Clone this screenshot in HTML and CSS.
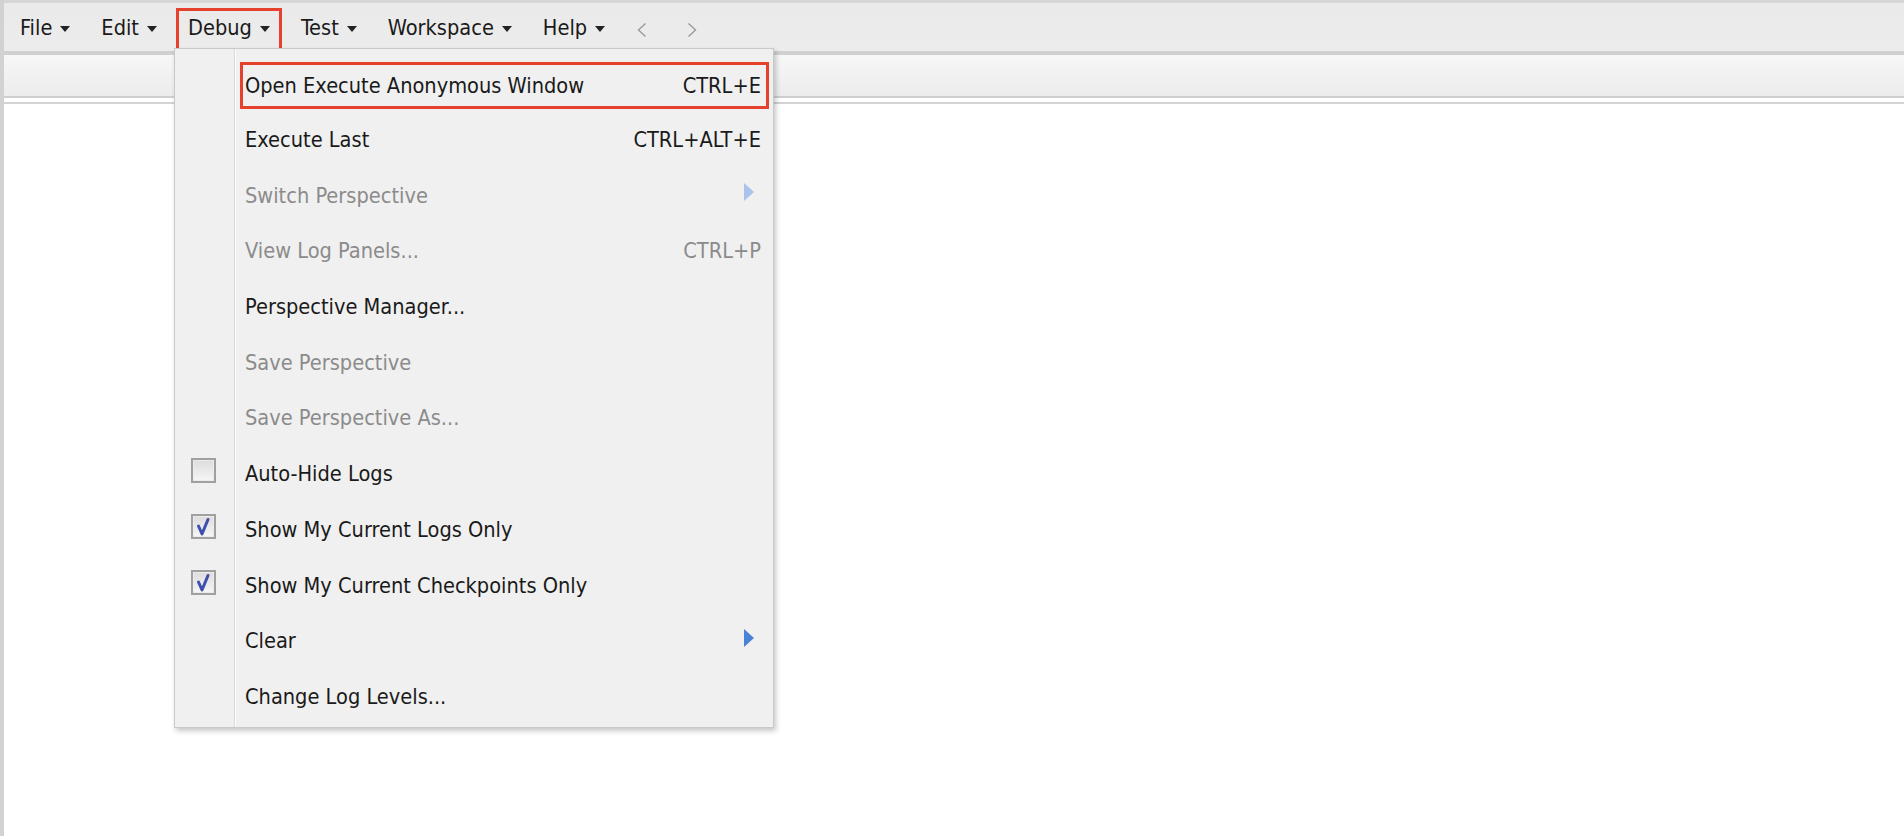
FILE: index.html
```html
<!DOCTYPE html>
<html lang="en">
<head>
<meta charset="utf-8">
<title>Developer Console</title>
<link rel="stylesheet" href="styles.css">
</head>
<body>
<div class="app">
  <div class="topstrip"></div>
  <nav class="menubar">
    <div class="mitem"><span>File</span><i class="caret"></i></div>
    <div class="mitem"><span>Edit</span><i class="caret"></i></div>
    <div class="mitem active"><span>Debug</span><i class="caret"></i></div>
    <div class="mitem"><span>Test</span><i class="caret"></i></div>
    <div class="mitem"><span>Workspace</span><i class="caret"></i></div>
    <div class="mitem"><span>Help</span><i class="caret"></i></div>
    <div class="navs">
      <svg class="chev" width="12" height="16" viewBox="0 0 12 16"><path d="M9.5 1.5 L2.5 8 L9.5 14.5" fill="none" stroke="#9a9a9a" stroke-width="1.4"/></svg>
      <svg class="chev" width="12" height="16" viewBox="0 0 12 16"><path d="M2.5 1.5 L9.5 8 L2.5 14.5" fill="none" stroke="#9a9a9a" stroke-width="1.4"/></svg>
    </div>
  </nav>
  <div class="toolbar"></div>
  <div class="content"></div>

  <div class="dropdown">
    <div class="row hl"><span class="icon"></span><span class="body"><span class="label">Open Execute Anonymous Window</span><span class="key">CTRL+E</span></span></div>
    <div class="row"><span class="icon"></span><span class="body"><span class="label">Execute Last</span><span class="key">CTRL+ALT+E</span></span></div>
    <div class="row dis"><span class="icon"></span><span class="body"><span class="label">Switch Perspective</span><span class="sub light"></span></span></div>
    <div class="row dis"><span class="icon"></span><span class="body"><span class="label">View Log Panels...</span><span class="key">CTRL+P</span></span></div>
    <div class="row"><span class="icon"></span><span class="body"><span class="label">Perspective Manager...</span></span></div>
    <div class="row dis"><span class="icon"></span><span class="body"><span class="label">Save Perspective</span></span></div>
    <div class="row dis"><span class="icon"></span><span class="body"><span class="label">Save Perspective As...</span></span></div>
    <div class="row"><span class="icon"><span class="cb"></span></span><span class="body"><span class="label">Auto-Hide Logs</span></span></div>
    <div class="row"><span class="icon"><span class="cb"><svg width="21" height="21" viewBox="0 0 21 21"><path d="M5.5 10 L9 18 L15 3.5" fill="none" stroke="#3d50ad" stroke-width="3" stroke-linecap="round" stroke-linejoin="round"/></svg></span></span><span class="body"><span class="label">Show My Current Logs Only</span></span></div>
    <div class="row"><span class="icon"><span class="cb"><svg width="21" height="21" viewBox="0 0 21 21"><path d="M5.5 10 L9 18 L15 3.5" fill="none" stroke="#3d50ad" stroke-width="3" stroke-linecap="round" stroke-linejoin="round"/></svg></span></span><span class="body"><span class="label">Show My Current Checkpoints Only</span></span></div>
    <div class="row"><span class="icon"></span><span class="body"><span class="label">Clear</span><span class="sub"></span></span></div>
    <div class="row"><span class="icon"></span><span class="body"><span class="label">Change Log Levels...</span></span></div>
  </div>
</div>
</body>
</html>
```

FILE: styles.css
```css
* { box-sizing: border-box; }
html, body { margin: 0; padding: 0; height: 100%; }
body {
  font-family: "DejaVu Sans Condensed", "DejaVu Sans", sans-serif;
  font-size: 21.6px;
  color: #1a1a1a;
  background: #ffffff;
}
.app {
  position: relative;
  height: 836px;
  border-left: 4px solid #d2d2d2;
  display: flex;
  flex-direction: column;
  overflow: hidden;
}
.topstrip { height: 3px; background: #d6d6d6; }
.menubar {
  height: 48px;
  background: linear-gradient(#eaeaea, #ececec);
  display: flex;
  align-items: flex-start;
  padding-left: 4px;
  gap: 7px;
}
.mitem {
  height: 44px;
  margin-top: 5px;
  border: 3px solid transparent;
  padding: 0 9px 0 9px;
  display: flex;
  align-items: center;
  gap: 8px;
  line-height: 1;
}
.mitem span { position: relative; top: -2px; }
.mitem.active { border-color: #e5412d; }
.caret {
  width: 0; height: 0;
  border-left: 5px solid transparent;
  border-right: 5px solid transparent;
  border-top: 6px solid #222;
  position: relative; top: -1px;
}
.navs {
  display: flex;
  gap: 38px;
  margin-left: 12px;
  margin-top: 19px;
}
.toolbar {
  height: 47px;
  border-top: 4px solid #d0d0d0;
  background: linear-gradient(#f7f7f7, #ececec);
  border-bottom: 2px solid #cfcfcf;
}
.content {
  flex: 1;
  border-top: 2px solid #d3d3d3;
  margin-top: 4px;
  background: #fff;
}
.dropdown {
  position: absolute;
  left: 170px;
  top: 48px;
  width: 600px;
  height: 680px;
  background: #f0f0f0;
  border: 1px solid #c9c9c9;
  box-shadow: 2px 3px 5px rgba(0,0,0,0.22);
  padding: 7px 0 4px 0;
  background-image: linear-gradient(to right, transparent 59px, #d8d8d8 59px, #d8d8d8 60px, #ffffff 60px, #ffffff 61px, transparent 61px);
}
.row {
  height: 55.7px;
  display: flex;
  align-items: stretch;
}
.row .icon {
  width: 62px;
  flex: none;
  display: flex;
  justify-content: center;
  align-items: center;
  padding-right: 6px;
}
.row .body {
  flex: 1;
  display: flex;
  align-items: center;
  padding: 0 12px 0 8px;
  min-width: 0;
}
.row .label {
  flex: 1;
  white-space: nowrap;
}
.row.dis { color: #8b8b8b; }
.row.hl .body {
  height: 47px;
  margin: 6px 4px 0 3px;
  border: 3px solid #e5412d;
  padding: 0 5px 0 2px;
}
.sub {
  width: 0; height: 0;
  border-top: 9px solid transparent;
  border-bottom: 9px solid transparent;
  border-left: 10px solid #4a82d6;
  margin-right: 7px;
  position: relative; top: -3px;
}
.sub.light { border-left-color: #a9c3ec; }
.cb {
  width: 25px; height: 25px;
  border: 2px solid #a0a0a0;
  background: linear-gradient(#dcdcdc, #f6f6f6);
  box-shadow: inset 0 0 0 1px #ececec;
  display: flex;
  align-items: center;
  justify-content: center;
  position: relative; top: -3px;
}
.cb svg { display: block; }
```
